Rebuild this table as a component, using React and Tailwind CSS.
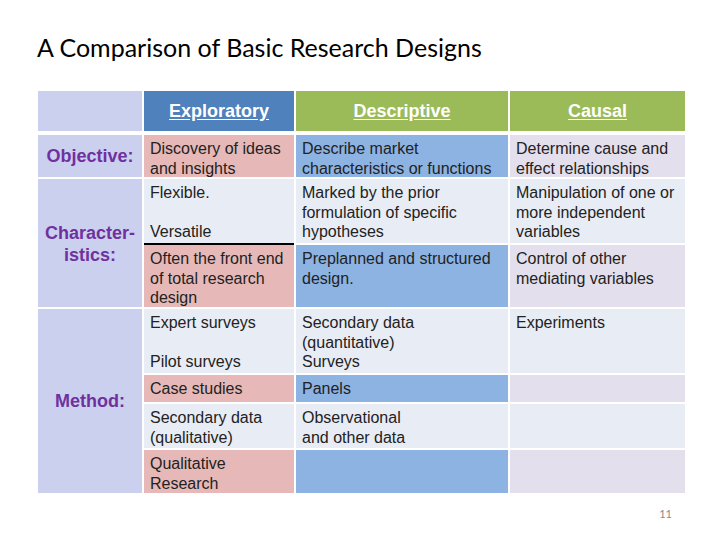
const body = "font-['Liberation_Sans',Arial,sans-serif] text-[16px] leading-[19.5px] text-[#222]";

function Cell({ bg, children, extra = "" }) {
  return <div className={`${bg} ${body} px-[6px] pt-[4px] ${extra}`}>{children}</div>;
}

function Label({ children, rows }) {
  return (
    <div
      className={`${rows} bg-[#cbd0ee] flex items-center justify-center text-center font-['Liberation_Sans',Arial,sans-serif] font-bold text-[18px] leading-[22px] text-[#7030a0]`}
    >
      {children}
    </div>
  );
}

function Head({ bg, children }) {
  return (
    <div
      className={`${bg} mb-[2px] flex items-center justify-center font-['Liberation_Sans',Arial,sans-serif] font-bold text-[18px] text-white underline underline-offset-2`}
    >
      {children}
    </div>
  );
}

const pink = "bg-[#e6b9b8]";
const blue = "bg-[#8db3e2]";
const lav = "bg-[#e4dfec]";
const light = "bg-[#e8ecf4]";

export default function App() {
  return (
    <div className="w-[720px] h-[540px] bg-white pl-[38px] pt-[33px]">
      <div className="ml-[-1px] font-['Lato','Open_Sans',sans-serif] text-[25px] leading-[28px] text-black">
        A Comparison of Basic Research Designs
      </div>

      <div className="mt-[30px] grid grid-cols-[104px_150px_212px_175px] grid-rows-[42px_42px_64px_62px_64px_27px_44px_43px] gap-[2px] w-[647px]">
        {/* header */}
        <div className="bg-[#cbd0ee] mb-[2px]"></div>
        <Head bg="bg-[#4f81bd]">Exploratory</Head>
        <Head bg="bg-[#9bbb59]">Descriptive</Head>
        <Head bg="bg-[#9bbb59]">Causal</Head>

        {/* objective */}
        <Label rows="">Objective:</Label>
        <Cell bg={pink}>Discovery of ideas and insights</Cell>
        <Cell bg={blue}>Describe market characteristics or functions</Cell>
        <Cell bg={lav}>Determine cause and effect relationships</Cell>

        {/* characteristics */}
        <Label rows="row-span-2 pt-[2px]">
          Character-
          <br />
          istics:
        </Label>
        <Cell bg={light}>
          Flexible.
          <br />
          <br />
          Versatile
        </Cell>
        <Cell bg={light}>Marked by the prior formulation of specific hypotheses</Cell>
        <Cell bg={light}>Manipulation of one or more independent variables</Cell>

        <Cell bg={pink} extra="shadow-[0_-2px_0_#000]">
          Often the front end of total research design
        </Cell>
        <Cell bg={blue}>Preplanned and structured design.</Cell>
        <Cell bg={lav}>Control of other mediating variables</Cell>

        {/* method */}
        <Label rows="row-span-4">Method:</Label>
        <Cell bg={light}>
          Expert surveys
          <br />
          <br />
          Pilot surveys
        </Cell>
        <Cell bg={light}>
          Secondary data
          <br />
          (quantitative)
          <br />
          Surveys
        </Cell>
        <Cell bg={light}>Experiments</Cell>

        <Cell bg={pink}>Case studies</Cell>
        <Cell bg={blue}>Panels</Cell>
        <Cell bg={lav}></Cell>

        <Cell bg={light}>
          Secondary data
          <br />
          (qualitative)
        </Cell>
        <Cell bg={light}>
          Observational
          <br />
          and other data
        </Cell>
        <Cell bg={light}></Cell>

        <Cell bg={pink}>
          Qualitative
          <br />
          Research
        </Cell>
        <Cell bg={blue}></Cell>
        <Cell bg={lav}></Cell>
      </div>

      <div className="w-[647px] flex justify-end pr-[13px] mt-[14px]">
        <span className="font-['Lato',sans-serif] text-[11px] leading-[14px] text-[#8a8a8a]">11</span>
      </div>
    </div>
  );
}
